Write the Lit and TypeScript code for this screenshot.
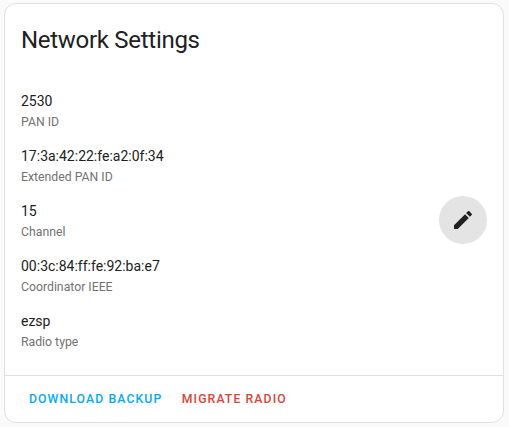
import { LitElement, html, css } from "lit";
import { customElement } from "lit/decorators.js";

const settings = [
  ["2530", "PAN ID"],
  ["17:3a:42:22:fe:a2:0f:34", "Extended PAN ID"],
  ["15", "Channel"],
  ["00:3c:84:ff:fe:92:ba:e7", "Coordinator IEEE"],
  ["ezsp", "Radio type"],
];

@customElement("app-root")
export class AppRoot extends LitElement {
  static styles = css`
    :host {
      display: block;
      box-sizing: border-box;
      width: 509px;
      height: 427px;
      padding: 3px 5px 4px 4px;
      background: #fafafa;
      font-family: Roboto, sans-serif;
      color: #212121;
      overflow: hidden;
    }
    .card {
      box-sizing: border-box;
      height: 420px;
      display: flex;
      flex-direction: column;
      background: #fff;
      border: 1px solid #e0e0e0;
      border-radius: 12px;
    }
    h1 {
      margin: 0;
      padding: 12px 16px 0;
      font-size: 24px;
      font-weight: 400;
      line-height: 48px;
      letter-spacing: -0.288px;
    }
    .content {
      flex: 1;
      display: flex;
      align-items: center;
      justify-content: space-between;
      padding: 0 16px;
    }
    .row {
      box-sizing: border-box;
      height: 55px;
      padding-top: 9px;
    }
    .value {
      font-size: 14px;
      line-height: 20px;
    }
    .label {
      font-size: 12.25px;
      line-height: 22px;
      color: #727272;
    }
    .edit {
      width: 48px;
      height: 48px;
      padding: 12px;
      border: 0;
      border-radius: 50%;
      background: #e4e4e4;
      color: #212121;
    }
    .edit svg {
      display: block;
      fill: currentColor;
    }
    .actions {
      display: flex;
      align-items: center;
      gap: 3.4px;
      box-sizing: border-box;
      height: 47px;
      padding: 0 16px;
      border-top: 1px solid #e0e0e0;
    }
    .action {
      border: 0;
      padding: 0 8px;
      background: none;
      font: 500 12.25px/36px Roboto, sans-serif;
      letter-spacing: 1.09375px;
      text-transform: uppercase;
      color: #03a9f4;
    }
    .warning {
      color: #db4437;
    }
  `;

  render() {
    return html`
      <section class="card">
        <h1>Network Settings</h1>
        <div class="content">
          <div>
            ${settings.map(
              ([value, label]) => html`<div class="row">
                <div class="value">${value}</div>
                <div class="label">${label}</div>
              </div>`
            )}
          </div>
          <button class="edit" aria-label="Edit">
            <svg width="24" height="24" viewBox="0 0 24 24">
              <path d="M20.71,7.04C21.1,6.65 21.1,6 20.71,5.63L18.37,3.29C18,2.9 17.35,2.9 16.96,3.29L15.12,5.12L18.87,8.87M3,17.25V21H6.75L17.81,9.93L14.06,6.18L3,17.25Z" />
            </svg>
          </button>
        </div>
        <div class="actions">
          <button class="action">Download backup</button>
          <button class="action warning">Migrate radio</button>
        </div>
      </section>
    `;
  }
}
